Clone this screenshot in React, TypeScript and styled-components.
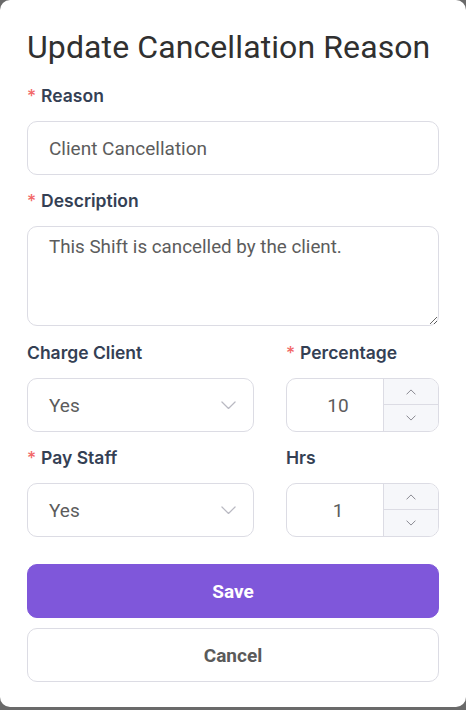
import React from "react";
import styled, { createGlobalStyle } from "styled-components";

const GlobalStyle = createGlobalStyle`
  html, body { margin: 0; padding: 0; background: #6a6a6a; }
  body { font-family: Roboto, "Noto Sans", sans-serif; }
  * { box-sizing: border-box; }
`;

const Modal = styled.div`
  width: 466px;
  height: 707px;
  background: #ffffff;
  border-radius: 10px;
  padding: 27px 27px 25px;
  display: flex;
  flex-direction: column;
`;

const Title = styled.h2`
  margin: 0 0 18px;
  font-family: Roboto, sans-serif;
  font-weight: 400;
  font-size: 32px;
  line-height: 40px;
  color: #303030;
  letter-spacing: 0.1px;
  white-space: nowrap;
`;

const Field = styled.div<{ $gap?: number }>`
  display: flex;
  flex-direction: column;
  margin-bottom: ${(p) => p.$gap ?? 15}px;
`;

const Label = styled.label`
  font-family: Inter, "Noto Sans", sans-serif;
  font-weight: 600;
  font-size: 17.5px;
  line-height: 22px;
  color: #344054;
  margin-bottom: 14px;
  display: flex;
  align-items: center;
`;

const Star = styled.span`
  color: #f26868;
  margin-right: 5px;
  font-weight: 500;
`;

const TextInput = styled.input`
  height: 54px;
  border: 1px solid #dcdce4;
  border-radius: 10px;
  padding: 0 21px;
  font-family: Roboto, sans-serif;
  font-size: 19px;
  color: #5c5c5c;
  background: #fff;
  outline: none;
  width: 100%;
`;

const TextArea = styled.textarea`
  height: 100px;
  border: 1px solid #dcdce4;
  border-radius: 10px;
  padding: 8px 21px;
  font-family: Roboto, sans-serif;
  font-size: 18.8px;
  line-height: 24px;
  color: #5c5c5c;
  background: #fff;
  outline: none;
  width: 100%;
  resize: vertical;
  display: block;
`;

const Row = styled.div`
  display: grid;
  grid-template-columns: 227px 1fr;
  column-gap: 32px;
`;

const SelectBox = styled.div`
  height: 54px;
  border: 1px solid #dcdce4;
  border-radius: 10px;
  padding: 0 17px 0 21px;
  display: flex;
  align-items: center;
  justify-content: space-between;
  font-family: Roboto, sans-serif;
  font-size: 19px;
  color: #5c5c5c;
  background: #fff;
`;

const NumberBox = styled.div`
  height: 54px;
  border: 1px solid #dcdce4;
  border-radius: 10px;
  display: grid;
  grid-template-columns: 1fr 55px;
  overflow: hidden;
  background: #fff;
`;

const NumberValue = styled.div`
  display: flex;
  align-items: center;
  justify-content: center;
  font-family: Roboto, sans-serif;
  font-size: 19px;
  color: #5c5c5c;
  padding-left: 6px;
`;

const Stepper = styled.div`
  display: grid;
  grid-template-rows: 1fr 1fr;
  border-left: 1px solid #dcdce4;
  background: #f6f7fa;
`;

const StepButton = styled.div<{ $top?: boolean }>`
  display: flex;
  align-items: center;
  justify-content: center;
  border-bottom: ${(p) => (p.$top ? "1px solid #dcdce4" : "none")};
`;

const Button = styled.button<{ $primary?: boolean }>`
  height: 54px;
  width: 100%;
  border-radius: 10px;
  border: 1px solid ${(p) => (p.$primary ? "#7f57da" : "#dcdce4")};
  background: ${(p) => (p.$primary ? "#7f57da" : "#ffffff")};
  color: ${(p) => (p.$primary ? "#ffffff" : "#5a5a5a")};
  font-family: Roboto, sans-serif;
  font-weight: 700;
  font-size: 19px;
  cursor: pointer;
`;

const Actions = styled.div`
  display: flex;
  flex-direction: column;
  gap: 10px;
  margin-top: 27px;
`;

const ChevronDown = ({ w = 15, color = "#b9b9c2" }: { w?: number; color?: string }) => (
  <svg width={w} height={w / 2 + 1} viewBox="0 0 16 9" fill="none">
    <path d="M1 1l7 7 7-7" stroke={color} strokeWidth="1.3" strokeLinecap="round" strokeLinejoin="round" />
  </svg>
);

const ChevronUp = ({ w = 10, color = "#8a8a92" }: { w?: number; color?: string }) => (
  <svg width={w} height={w / 2 + 1} viewBox="0 0 12 7" fill="none">
    <path d="M1 6l5-5 5 5" stroke={color} strokeWidth="1.2" strokeLinecap="round" strokeLinejoin="round" />
  </svg>
);

const SmallDown = ({ w = 10, color = "#8a8a92" }: { w?: number; color?: string }) => (
  <svg width={w} height={w / 2 + 1} viewBox="0 0 12 7" fill="none">
    <path d="M1 1l5 5 5-5" stroke={color} strokeWidth="1.2" strokeLinecap="round" strokeLinejoin="round" />
  </svg>
);

const Select = ({ value }: { value: string }) => (
  <SelectBox>
    <span>{value}</span>
    <ChevronDown />
  </SelectBox>
);

const NumberInput = ({ value }: { value: string }) => (
  <NumberBox>
    <NumberValue>{value}</NumberValue>
    <Stepper>
      <StepButton $top>
        <ChevronUp />
      </StepButton>
      <StepButton>
        <SmallDown />
      </StepButton>
    </Stepper>
  </NumberBox>
);

export default function App() {
  return (
    <>
      <GlobalStyle />
      <Modal>
        <Title>Update Cancellation Reason</Title>
        <Field>
          <Label>
            <Star>*</Star>Reason
          </Label>
          <TextInput defaultValue="Client Cancellation" />
        </Field>
        <Field $gap={16}>
          <Label>
            <Star>*</Star>Description
          </Label>
          <TextArea defaultValue="This Shift is cancelled by the client." />
        </Field>
        <Row>
          <Field>
            <Label>Charge Client</Label>
            <Select value="Yes" />
          </Field>
          <Field>
            <Label>
              <Star>*</Star>Percentage
            </Label>
            <NumberInput value="10" />
          </Field>
        </Row>
        <Row>
          <Field $gap={0}>
            <Label>
              <Star>*</Star>Pay Staff
            </Label>
            <Select value="Yes" />
          </Field>
          <Field $gap={0}>
            <Label>Hrs</Label>
            <NumberInput value="1" />
          </Field>
        </Row>
        <Actions>
          <Button $primary>Save</Button>
          <Button>Cancel</Button>
        </Actions>
      </Modal>
    </>
  );
}
